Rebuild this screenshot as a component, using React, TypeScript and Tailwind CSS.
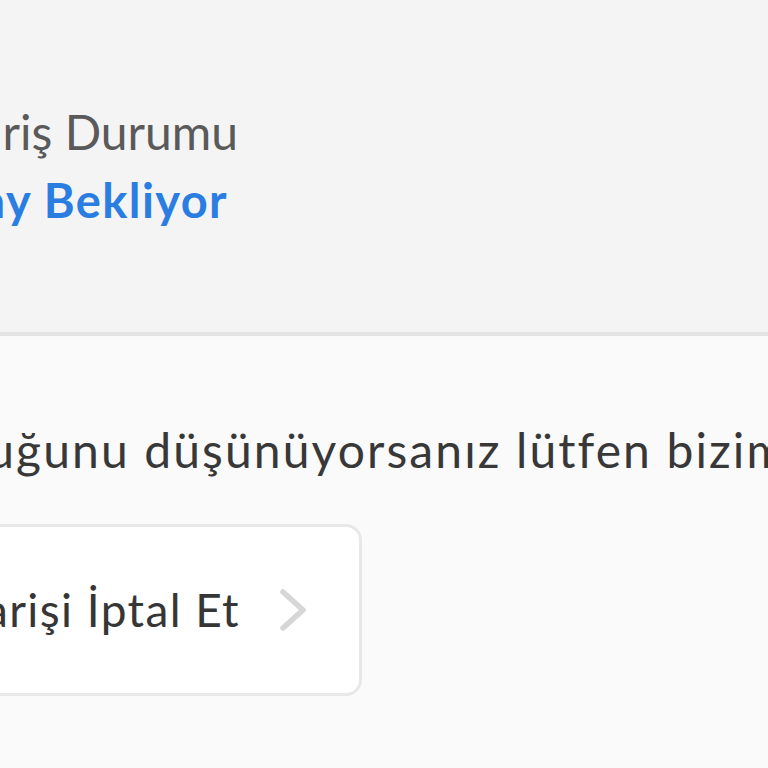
const font = { fontFamily: 'Lato, "Noto Sans", sans-serif' };

// Right-aligned, clipped-on-the-left line (the screenshot is a crop)
const EndLine = ({ width, className, children }: { width: string; className: string; children: React.ReactNode }) => (
  <div className={`flex justify-end whitespace-nowrap ${width} ${className}`}>
    <span>{children}</span>
  </div>
);

const Chevron = () => (
  <svg width="30" height="46" viewBox="0 0 30 46" fill="none" className="shrink-0">
    <polyline points="5,5 25,23 5,41" stroke="#d6d6d6" strokeWidth="5.5" strokeLinecap="round" strokeLinejoin="round" />
  </svg>
);

export default function App() {
  return (
    <div className="w-[768px] h-[768px] overflow-hidden bg-[#fafafa]" style={font}>
      {/* Order status header */}
      <div className="h-[336px] bg-[#f4f4f4] border-b-[4px] border-[#e3e3e3] pt-[104px]">
        <EndLine width="w-[238px]" className="text-[48px] leading-[56px] text-[#5a5a5a]">
          Sipariş Durumu
        </EndLine>
        <EndLine width="w-[228px]" className="mt-[12px] text-[47px] leading-[56px] tracking-[1.4px] font-bold text-[#2a7de1]">
          Onay Bekliyor
        </EndLine>
      </div>

      {/* Info text */}
      <div className="pt-[84px]">
        <EndLine width="w-[788px]" className="text-[48px] leading-[60px] tracking-[2.1px] text-[#383838]">
          Siparişinizde bir sorun olduğunu düşünüyorsanız lütfen bizim
          <span className="inline-block w-0">le iletişime geçin</span>
        </EndLine>
      </div>

      {/* Cancel button */}
      <div className="mt-[44px] w-[382px] h-[172px] -ml-[20px] bg-white border-[3px] border-[#e8e8e8] rounded-[16px] flex items-center">
        <EndLine width="w-[257px]" className="text-[46px] leading-[56px] tracking-[1.4px] text-[#363636]">
          Siparişi İptal Et
        </EndLine>
        <div className="ml-[38px]">
          <Chevron />
        </div>
      </div>
    </div>
  );
}
